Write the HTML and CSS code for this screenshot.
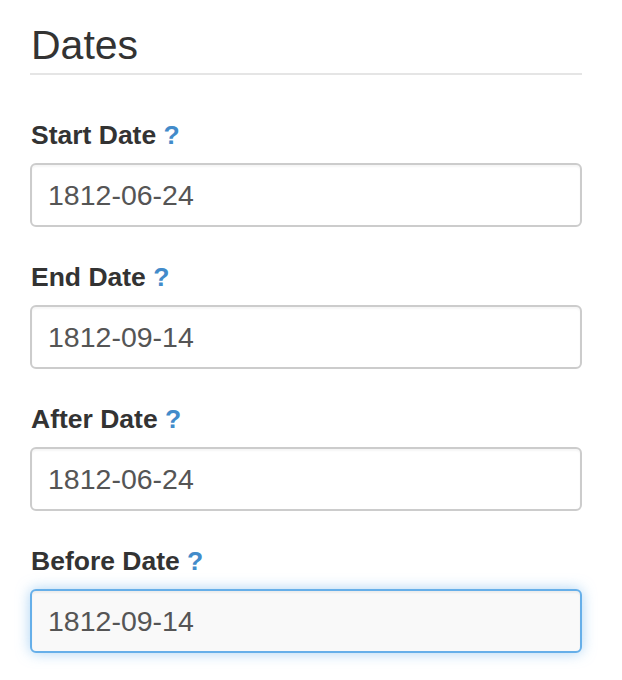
FILE: index.html
```html
<!DOCTYPE html>
<html lang="en">
<head>
<meta charset="utf-8">
<title>Dates</title>
<link rel="stylesheet" href="styles.css">
</head>
<body>
<form class="panel">
  <h2 class="legend">Dates</h2>
  <div class="group">
    <label class="label" for="start">Start Date <span class="help">?</span></label>
    <input class="field" id="start" type="text" value="1812-06-24">
  </div>
  <div class="group">
    <label class="label" for="end">End Date <span class="help">?</span></label>
    <input class="field" id="end" type="text" value="1812-09-14">
  </div>
  <div class="group">
    <label class="label" for="after">After Date <span class="help">?</span></label>
    <input class="field" id="after" type="text" value="1812-06-24">
  </div>
  <div class="group">
    <label class="label" for="before">Before Date <span class="help">?</span></label>
    <input class="field field-focus" id="before" type="text" value="1812-09-14">
  </div>
</form>
</body>
</html>
```

FILE: styles.css
```css
html, body {
  margin: 0;
  padding: 0;
  background: #ffffff;
}

body {
  font-family: "Liberation Sans", Arial, Helvetica, sans-serif;
  color: #333333;
}

.panel {
  width: 552px;
  padding: 23px 0 0 30px;
  margin: 0;
}

.legend {
  margin: 0 0 45px 0;
  padding: 0 0 6px 1px;
  font-size: 41px;
  line-height: 44px;
  font-weight: normal;
  color: #333333;
  border-bottom: 2px solid #e5e5e5;
}

.group {
  display: flex;
  flex-direction: column;
  margin-bottom: 35px;
}

.label {
  display: block;
  font-size: 26.5px;
  line-height: 30px;
  font-weight: bold;
  color: #333333;
  margin: 0 0 13px 1px;
}

.help {
  color: #428bca;
  font-weight: bold;
}

.field {
  box-sizing: border-box;
  width: 552px;
  height: 64px;
  margin: 0;
  padding: 0 16px;
  font-family: "Liberation Sans", Arial, Helvetica, sans-serif;
  font-size: 28.5px;
  color: #555555;
  background: #ffffff;
  border: 2px solid #cccccc;
  border-radius: 6px;
  box-shadow: inset 0 2px 2px rgba(0, 0, 0, 0.04);
  outline: none;
}

.field-focus {
  background: #f9f9f9;
  border-color: #66afe9;
  box-shadow: inset 0 2px 2px rgba(0, 0, 0, 0.05), 0 0 14px rgba(102, 175, 233, 0.55);
}
```
